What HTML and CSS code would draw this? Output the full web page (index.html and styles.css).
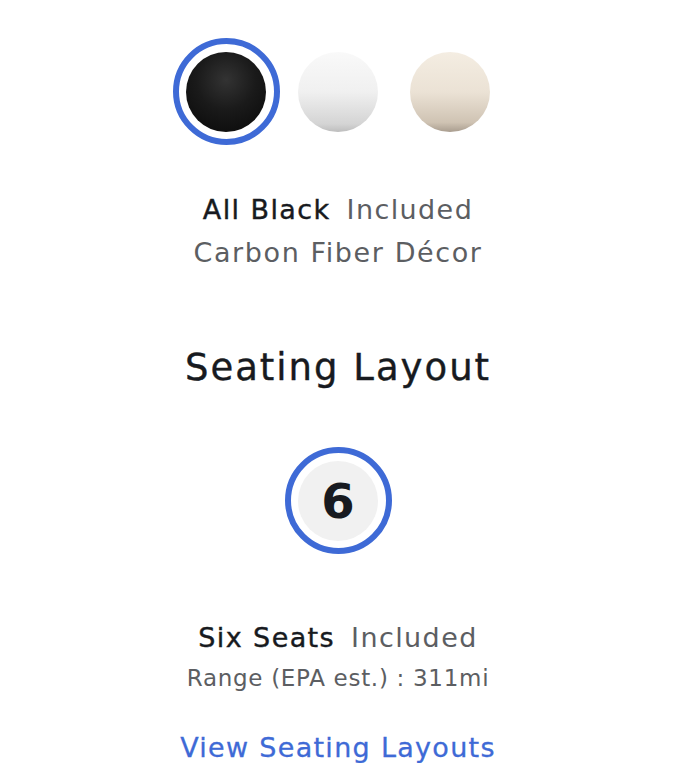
FILE: index.html
```html
<!DOCTYPE html>
<html lang="en">
<head>
    <meta charset="UTF-8">
    <meta name="viewport" content="width=device-width, initial-scale=1.0">
    <title>Interior</title>
    <link rel="stylesheet" href="styles.css">
</head>
<body>
    <div class="config">
        <div class="swatches">
            <div class="swatch-slot selected"><span class="swatch black"></span></div>
            <div class="swatch-slot"><span class="swatch white"></span></div>
            <div class="swatch-slot"><span class="swatch cream"></span></div>
        </div>

        <p class="option"><span class="name">All Black</span><span class="price">Included</span></p>
        <p class="detail">Carbon Fiber Décor</p>

        <h2 class="section-title">Seating Layout</h2>

        <div class="seats">
            <div class="seat-slot selected"><span class="seat">6</span></div>
        </div>

        <p class="option seat-option"><span class="name">Six Seats</span><span class="price">Included</span></p>
        <p class="detail small">Range (EPA est.) : 311mi</p>

        <a class="link" href="#">View Seating Layouts</a>
    </div>
</body>
</html>
```

FILE: styles.css
```css
body {
    margin: 0;
    background: #fff;
    font-family: "DejaVu Sans", sans-serif;
    color: #171a20;
}

.config {
    width: 676px;
    text-align: center;
    padding-top: 38px;
}

.swatches,
.seats {
    display: flex;
    justify-content: center;
    gap: 5px;
}

.swatch-slot,
.seat-slot {
    width: 107px;
    height: 107px;
    box-sizing: border-box;
    border-radius: 50%;
    display: flex;
    align-items: center;
    justify-content: center;
}

.selected {
    border: 6px solid #3e6ad6;
}

.swatch,
.seat {
    width: 80px;
    height: 80px;
    border-radius: 50%;
    display: block;
}

.black {
    background: radial-gradient(circle at 50% 35%, #333 0%, #1a1a1a 45%, #080808 100%);
}

.white {
    background: linear-gradient(#f9f9f9 0%, #f0f0f0 50%, #d4d4d4 90%, #bdbdbd 100%);
}

.cream {
    background: linear-gradient(#f4ede2 0%, #ebe2d5 50%, #cfc3b3 88%, #a99d8f 100%);
}

.option {
    margin: 47px 0 0;
    font-size: 27px;
    line-height: 36px;
    letter-spacing: 1.4px;
}

.name {
    color: #171a20;
    margin-right: 16px;
    -webkit-text-stroke: 0.4px #171a20;
}

.price,
.detail {
    color: #5c5e62;
}

.detail {
    margin: 7px 0 0;
    font-size: 27px;
    line-height: 36px;
    letter-spacing: 1.6px;
}

.section-title {
    margin: 74px 0 0;
    font-size: 37px;
    line-height: 46px;
    font-weight: 500;
    letter-spacing: 2px;
    -webkit-text-stroke: 0.4px #171a20;
}

.seats {
    margin-top: 56px;
}

.seat {
    background: #f1f1f1;
    font-size: 48px;
    font-weight: bold;
    line-height: 80px;
    text-align: center;
}

.seat-option {
    margin-top: 66px;
}

.detail.small {
    margin-top: 4px;
    font-size: 23px;
    letter-spacing: 0.7px;
}

.link {
    display: inline-block;
    margin-top: 36px;
    font-size: 27px;
    letter-spacing: 1.3px;
    color: #3e6ad6;
    text-decoration: none;
    -webkit-text-stroke: 0.3px #3e6ad6;
}
```
